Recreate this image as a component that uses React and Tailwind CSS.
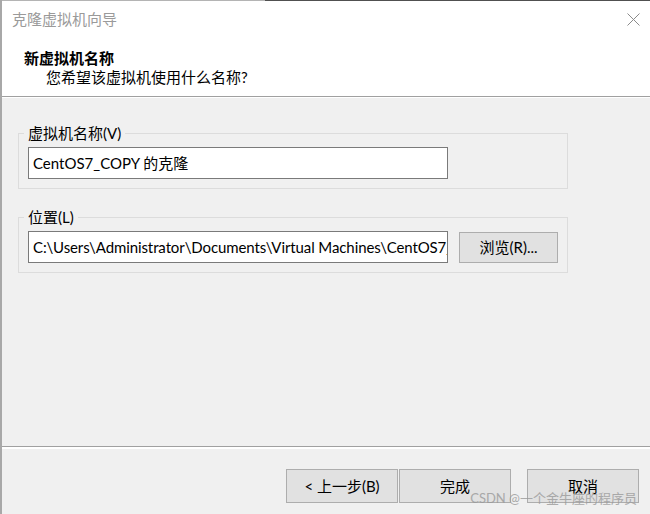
import React from 'react'

const font = { fontFamily: 'Lato, "Noto Sans CJK SC", sans-serif' }

// Win32-style push button
const Btn = ({ children, className = '' }) => (
  <button
    className={`h-[34px] w-[112px] border border-[#adadad] bg-[#e1e1e1] text-[15px] text-black ${className}`}
  >
    {children}
  </button>
)

const GroupBox = ({ label, children, className = '' }) => (
  <fieldset className={`w-[550px] border border-[#dcdcdc] pl-[5px] pb-[9px] ${className}`}>
    <legend className="px-[4px] text-[15px] leading-[20px] text-black">{label}</legend>
    <div className="ml-[4px] mt-[4px] flex items-center gap-[11px]">{children}</div>
  </fieldset>
)

export default function App() {
  return (
    <div
      style={font}
      className="relative flex h-[514px] w-[650px] flex-col overflow-hidden border-l-2 border-[#a8a8a8] bg-[#f0f0f0]"
    >
      {/* window top edge */}
      <div className="flex h-px">
        <div className="w-[263px] bg-[#b4b4b4]" />
        <div className="flex-1 bg-[#505050]" />
      </div>

      {/* Header */}
      <div className="h-[96px] border-b border-[#a0a0a0] bg-white">
        <div className="flex h-[37px] items-center justify-between pl-[10px] pr-[10px]">
          <span className="text-[15px] text-[#9a9a9a]">克隆虚拟机向导</span>
          <svg width="13" height="13" viewBox="0 0 13 13">
            <path d="M0.5 0.5L12.5 12.5M12.5 0.5L0.5 12.5" stroke="#8a8a8a" strokeWidth="1" fill="none" />
          </svg>
        </div>
        <div className="pl-[22px] pt-[11px]">
          <div className="text-[15px] font-bold leading-[18px] text-black">新虚拟机名称</div>
          <div className="pl-[22px] text-[15px] leading-[20px] text-black">您希望该虚拟机使用什么名称?</div>
        </div>
      </div>
      <div className="h-px bg-white" />

      {/* Body */}
      <div className="flex flex-1 flex-col pl-[16px] pt-[25px]">
        <GroupBox label="虚拟机名称(V)">
          <div className="flex h-[32px] w-[420px] items-center border border-[#7a7a7a] bg-white px-[4px] text-[15px] text-black">
            CentOS7_COPY 的克隆
          </div>
        </GroupBox>

        <GroupBox label="位置(L)" className="mt-[18px]">
          <div className="flex h-[32px] w-[420px] items-center overflow-hidden whitespace-nowrap border border-[#7a7a7a] bg-white pl-[4px] text-[15px] tracking-[-0.1px] text-black">
            C:\Users\Administrator\Documents\Virtual Machines\CentOS7_COPY 的克隆
          </div>
          <button className="h-[31px] w-[99px] border border-[#adadad] bg-[#e1e1e1] text-[15px] text-black">
            浏览(R)...
          </button>
        </GroupBox>
      </div>

      {/* Footer */}
      <div className="border-t border-[#a0a0a0]">
        <div className="h-[2px] bg-white" />
        <div className="flex h-[65px] items-start pl-[284px] pt-[20px]">
          <Btn>&lt; 上一步(B)</Btn>
          <Btn className="ml-[1px]">完成</Btn>
          <Btn className="ml-[16px]">取消</Btn>
        </div>
      </div>

      {/* watermark */}
      <div className="pointer-events-none absolute bottom-[7px] right-[13px] text-[13px] leading-[18px] text-[#9a9a9a] opacity-80">
        CSDN @一个金牛座的程序员
      </div>
    </div>
  )
}
